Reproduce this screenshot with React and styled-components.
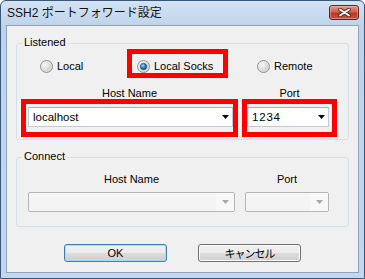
import { useId } from "react"
import styled, { createGlobalStyle } from "styled-components"

const Global = createGlobalStyle`
    html, body {
        margin: 0;
        padding: 0;
        width: 365px;
        height: 279px;
        overflow: hidden;
        background: #ffffff;
    }
    * {
        box-sizing: border-box;
    }
`

function Radio({ checked }) {
    const id = useId().replace(/:/g, "")
    return (
        <svg width="13" height="13" viewBox="0 0 13 13">
            <defs>
                <linearGradient id={"ring" + id} x1="0" y1="0" x2="1" y2="1">
                    <stop offset="0" stopColor="#f4f4f4" />
                    <stop offset="1" stopColor="#d4d4d4" />
                </linearGradient>
                <radialGradient id={"well" + id} cx="0.35" cy="0.35" r="0.8">
                    <stop offset="0" stopColor="#fbfbfb" />
                    <stop offset="1" stopColor="#c9c9c9" />
                </radialGradient>
                <radialGradient id={"dot" + id} cx="0.4" cy="0.35" r="0.75">
                    <stop offset="0" stopColor="#9fdcff" />
                    <stop offset="0.45" stopColor="#2f86d0" />
                    <stop offset="1" stopColor="#0b3a6c" />
                </radialGradient>
            </defs>
            <circle cx="6.5" cy="6.5" r="6" fill={`url(#ring${id})`} stroke="#8c8e8f" />
            <circle cx="6.5" cy="6.5" r="4.3" fill={`url(#well${id})`} />
            {checked && <circle cx="6.5" cy="6.5" r="3.2" fill={`url(#dot${id})`} stroke="#1b4877" strokeWidth="0.6" />}
        </svg>
    )
}

function Arrow({ color }) {
    return (
        <svg width="7" height="4" viewBox="0 0 7 4">
            <path d="M0 0 H7 L3.5 4 Z" fill={color} />
        </svg>
    )
}

function Combo({ value, disabled, spaced }) {
    return (
        <ComboBox $disabled={disabled}>
            <ComboText $spaced={spaced}>{value}</ComboText>
            <ComboArrow $disabled={disabled}>
                <Arrow color={disabled ? "#a8a8a8" : "#000000"} />
            </ComboArrow>
        </ComboBox>
    )
}

export default function App() {
    return (
        <>
            <Global />
            <Window>
                <TitleBar>
                    <Title>SSH2 ポートフォワード設定</Title>
                    <CloseButton>
                        <svg width="13" height="9" viewBox="0 0 13 9">
                            <path d="M2 1.5 L11 7.5 M11 1.5 L2 7.5" stroke="#4d1d1d" strokeWidth="3.6" strokeLinecap="round" />
                            <path d="M2 1.5 L11 7.5 M11 1.5 L2 7.5" stroke="#ffffff" strokeWidth="2" strokeLinecap="round" />
                        </svg>
                    </CloseButton>
                </TitleBar>
                <Client>
                    <Group>
                        <Legend>Listened</Legend>
                        <RadioRow>
                            <RadioCell $left={19}>
                                <RadioOption><Radio /><span>Local</span></RadioOption>
                            </RadioCell>
                            <Highlight $pad="6px 0 0 5px">
                                <RadioOption><Radio checked /><span>Local Socks</span></RadioOption>
                            </Highlight>
                            <RadioCell $left={29}>
                                <RadioOption><Radio /><span>Remote</span></RadioOption>
                            </RadioCell>
                        </RadioRow>
                        <LabelRow $cols="217px 95px" $gap={4} $top={10}>
                            <Label>Host Name</Label>
                            <Label>Port</Label>
                        </LabelRow>
                        <FieldRow $cols="217px 95px" $gap={4}>
                            <Highlight $pad="3px 0 0 2px">
                                <Combo value="localhost" />
                            </Highlight>
                            <Highlight $pad="3px 3px 0 0">
                                <Combo value="1234" spaced />
                            </Highlight>
                        </FieldRow>
                    </Group>
                    <Group $pad="15px 18px 14px 11px">
                        <Legend>Connect</Legend>
                        <LabelRow $cols="207px 84px" $gap={10} $top={0}>
                            <Label>Host Name</Label>
                            <Label>Port</Label>
                        </LabelRow>
                        <FieldRow $cols="207px 84px" $gap={10} $top={7}>
                            <Combo value="" disabled />
                            <Combo value="" disabled />
                        </FieldRow>
                    </Group>
                    <ButtonRow>
                        <Button $default>OK</Button>
                        <Button $cjk>キャンセル</Button>
                    </ButtonRow>
                </Client>
            </Window>
        </>
    )
}

const Window = styled.div`
    width: 365px;
    height: 279px;
    display: flex;
    flex-direction: column;
    border: 1px solid #3b5878;
    border-radius: 6px 6px 0 0;
    padding: 0 5px 5px 5px;
    background: linear-gradient(#d3e3f4 0px, #bfd4eb 24px, #c2d7ed 100%);
`
const TitleBar = styled.div`
    height: 24px;
    display: flex;
    justify-content: space-between;
    align-items: flex-start;
`
const Title = styled.div`
    margin-top: 5px;
    padding-left: 1px;
    font-family: "Liberation Sans", "Noto Sans CJK JP", sans-serif;
    font-size: 12px;
    line-height: 15px;
    color: #111111;
`
const CloseButton = styled.div`
    width: 30px;
    height: 15px;
    margin-top: 4px;
    display: flex;
    align-items: center;
    justify-content: center;
    border: 1px solid #5e2520;
    border-radius: 3px;
    background: linear-gradient(#e39a8c 0%, #d0604c 45%, #b93824 55%, #c9523c 100%);
    box-shadow: inset 0 0 0 1px rgba(255, 210, 200, 0.4);
`
const Client = styled.div`
    flex: 1;
    background: #f0f0f0;
    border: 1px solid #8fa3bd;
    padding: 0 9px;
    font-family: "Liberation Sans", "Noto Sans CJK JP", sans-serif;
    font-size: 11px;
    color: #000000;
`
const Group = styled.div`
    position: relative;
    margin-top: 17px;
    border: 1px solid #d5dfe5;
    border-radius: 3px;
    padding: ${(p) => p.$pad || "5px 10px 2px 4px"};
`
const Legend = styled.div`
    position: absolute;
    top: -8px;
    left: 5px;
    padding: 0 2px;
    background: #f0f0f0;
    line-height: 13px;
`
const RadioRow = styled.div`
    display: grid;
    grid-template-columns: 106px 101px 1fr;
    height: 28px;
`
const RadioCell = styled.div`
    padding: 11px 0 0 ${(p) => p.$left}px;
`
const RadioOption = styled.div`
    display: flex;
    align-items: center;
    gap: 4px;
    height: 13px;
    line-height: 13px;
    white-space: nowrap;
    svg {
        flex: none;
    }
`
const Highlight = styled.div`
    border: 5px solid #ff0000;
    padding: ${(p) => p.$pad};
    height: 100%;
`
const LabelRow = styled.div`
    display: grid;
    grid-template-columns: ${(p) => p.$cols};
    column-gap: ${(p) => p.$gap}px;
    margin-top: ${(p) => p.$top}px;
    height: 12px;
`
const Label = styled.div`
    text-align: center;
    line-height: 13px;
`
const FieldRow = styled.div`
    display: grid;
    grid-template-columns: ${(p) => p.$cols};
    column-gap: ${(p) => p.$gap}px;
    margin-top: ${(p) => p.$top || 0}px;
    height: ${(p) => (p.$top ? 20 : 38)}px;
`
const ComboBox = styled.div`
    height: 20px;
    display: flex;
    align-items: center;
    border: 1px solid ${(p) => (p.$disabled ? "#b5b5b5" : "#c5c9cf")};
    border-top-color: ${(p) => (p.$disabled ? "#b5b5b5" : "#abadb3")};
    border-radius: ${(p) => (p.$disabled ? "2px" : "0")};
    background: ${(p) => (p.$disabled ? "#f4f4f4" : "#ffffff")};
    overflow: hidden;
`
const ComboText = styled.div`
    flex: 1;
    padding-left: 4px;
    font-size: 11.5px;
    letter-spacing: ${(p) => (p.$spaced ? "0.8px" : "0")};
    line-height: 18px;
    white-space: nowrap;
`
const ComboArrow = styled.div`
    width: ${(p) => (p.$disabled ? "18px" : "14px")};
    height: 100%;
    display: flex;
    align-items: center;
    justify-content: center;
    background: ${(p) => (p.$disabled ? "#f8f8f8" : "transparent")};
`
const ButtonRow = styled.div`
    display: flex;
    justify-content: center;
    gap: 31px;
    margin-top: 17px;
`
const Button = styled.div`
    width: 103px;
    height: 18px;
    display: flex;
    align-items: center;
    justify-content: center;
    border: 1px solid ${(p) => (p.$default ? "#3c7fb1" : "#707070")};
    border-radius: 3px;
    background: linear-gradient(#f2f2f2 0%, #ebebeb 50%, #dddddd 51%, #cfcfcf 100%);
    box-shadow: inset 0 0 0 1px ${(p) => (p.$default ? "#a9dcf5" : "#fcfcfc")};
    font-family: ${(p) => (p.$cjk ? '"Noto Sans CJK JP", sans-serif' : '"Liberation Sans", sans-serif')};
    font-size: 11px;
    letter-spacing: ${(p) => (p.$cjk ? "-1px" : "0")};
    line-height: 14px;
`
